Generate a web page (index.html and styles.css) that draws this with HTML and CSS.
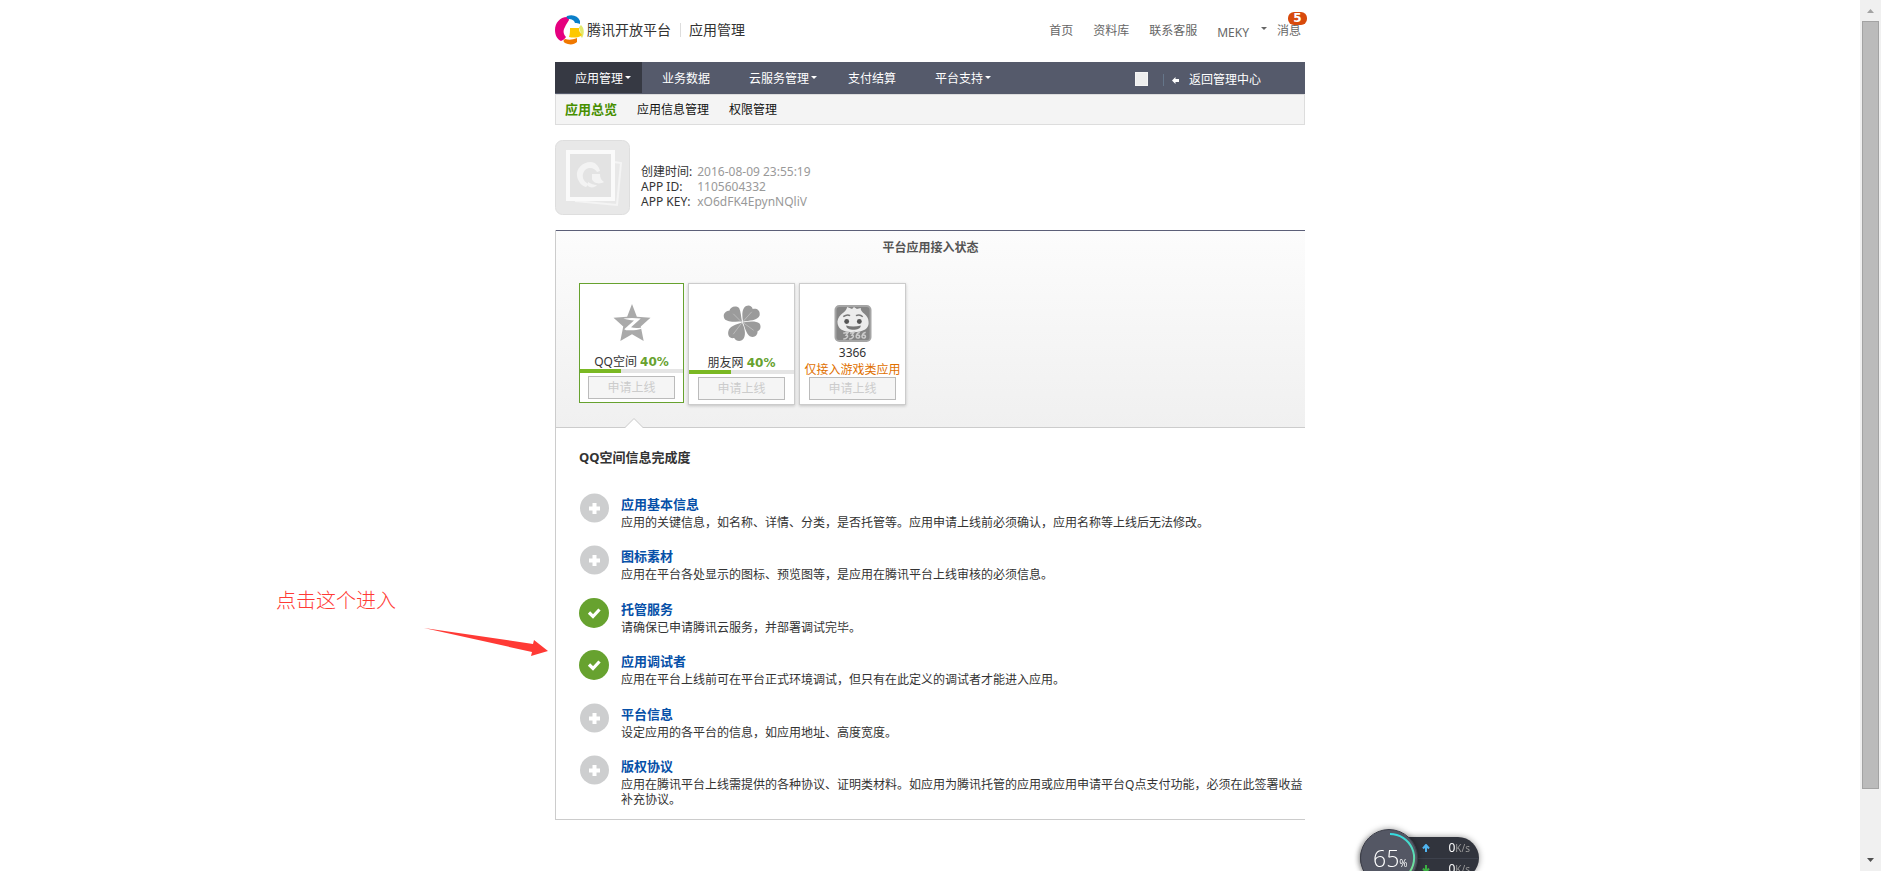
FILE: index.html
```html
<!DOCTYPE html>
<html lang="zh-CN">
<head>
<meta charset="utf-8">
<title>腾讯开放平台 - 应用管理</title>
<link rel="stylesheet" href="styles.css">
</head>
<body>
<svg class="defs" aria-hidden="true">
  <symbol id="plus" viewBox="0 0 30 30"><circle cx="15.500" cy="15" r="14.500" fill="#cdcecf"/><path d="M13.500 10h4v3.500h3.500v4h-3.500v3.500h-4v-3.500h-3.500v-4h3.500z" fill="#fff"/></symbol>
  <symbol id="check" viewBox="0 0 30 30"><circle cx="15" cy="15" r="15" fill="#67a22f"/><path d="M10 14.500l4 4 6.500-7" fill="none" stroke="#fff" stroke-width="3.200"/></symbol>
</svg>
<div class="page">
  <main class="container">
    <header class="header">
      <svg class="logo" viewBox="0 0 30 32" aria-hidden="true">
        <path d="M12 3C5 3 0 9 0 16c0 5 2 9 6 11 2-1 4-2 5-4-3-3-3-7-1-10 1-3 3-5 4-7 0-2-1-3-2-3z" fill="#e5007f"/>
        <path d="M12 2c6-2 11 0 13 5v3c-2-1-3-1-5-1-1-3-3-4-7-4-1-1-2-2-1-3z" fill="#0a7fc9"/>
        <path d="M26 11c3 3 4 8 1 13l-2-3c1-3 0-5-1-7 0-1 1-2 2-3z" fill="#e3e96b"/>
        <path d="M15 14h9c0 3 1 5 3 7-3 3-9 3-13 2 1-3 1-6 1-9z" fill="#fdc800"/>
        <path d="M10 25c4 1 7 1 12-1v4c-3 3-8 3-12 1-2-1-2-3 0-4z" fill="#f07800"/>
      </svg>
      <h1 class="brand">腾讯开放平台</h1>
      <span class="section">应用管理</span>
      <nav class="toplinks">
        <a href="#">首页</a>
        <a href="#">资料库</a>
        <a href="#">联系客服</a>
        <a href="#" class="user">MEKY<i class="caret"></i></a>
        <a href="#" class="news">消息<b class="badge">5</b></a>
      </nav>
    </header>

    <nav class="mainnav">
      <a href="#" class="active">应用管理<i class="caret"></i></a>
      <a href="#">业务数据</a>
      <a href="#">云服务管理<i class="caret"></i></a>
      <a href="#">支付结算</a>
      <a href="#">平台支持<i class="caret"></i></a>
      <span class="tile"></span>
      <a href="#" class="back"><svg viewBox="0 0 7 7" aria-hidden="true"><path d="M0 3.500L3.500 0v2H7v3H3.500v2z" fill="#fff"/></svg>返回管理中心</a>
    </nav>
    <nav class="subnav">
      <a href="#" class="current">应用总览</a>
      <a href="#">应用信息管理</a>
      <a href="#">权限管理</a>
    </nav>

    <section class="app">
      <svg class="avatar" viewBox="0 0 75 75" aria-hidden="true">
        <rect x=".5" y=".5" width="74" height="74" rx="7" fill="#e8e8e8" stroke="#dedede"/>
        <path d="M59 22l7 1-4 42-42-4" fill="none" stroke="#f4f4f4" stroke-width="2"/>
        <rect x="13" y="12" width="45" height="47" fill="#e3e3e3" stroke="#fafafa" stroke-width="4"/>
        <path d="M36 22c-9 0-15 7-14 14 1 6 5 10 9 11l3-3c-5-2-7-6-6-10 1-4 4-6 7-6s6 2 7 4l3-1c-1-5-5-9-9-9z" fill="#f3f3f3"/>
        <path d="M37 34h8c0 4 1 6 4 8-5 3-11 1-12-3z" fill="#f3f3f3"/><path d="M33 42c3 2 6 3 9 3-2 3-7 3-9 1z" fill="#f3f3f3"/>
      </svg>
      <dl class="meta">
        <dt>创建时间:</dt><dd>2016-08-09 23:55:19</dd>
        <dt>APP ID:</dt><dd>1105604332</dd>
        <dt>APP KEY:</dt><dd>xO6dFK4EpynNQliV</dd>
      </dl>
    </section>

    <section class="panel">
      <div class="status">
        <h2>平台应用接入状态</h2>
        <div class="cards">
          <article class="card selected">
            <svg class="icon" viewBox="0 0 38 38" aria-hidden="true">
              <path d="M19 0l5 13 14 1-10 9 3 15-12-7-12 7 3-15L0 14l14-1z" fill="#aaa"/>
              <path d="M10 15c6-1 12-1 18 0L18 24c4 1 9 1 14-1-3 3-7 4-19 4l-2-1 10-9c-4 0-7-1-11-2z" fill="#fff"/>
            </svg>
            <p class="name">QQ空间 <b>40%</b></p>
            <progress value="40" max="100" aria-label="QQ空间"></progress>
            <button disabled>申请上线</button>
          </article>
          <article class="card">
            <svg class="icon" viewBox="0 0 38 38" aria-hidden="true">
              <g fill="#9b9b9b"><path d="M19 17C18 12 18 7 16 3 12 0 7 2 6 6 1 6-1 11 1 14c3 4 12 3 18 3z"/><path d="M20 17c-1-6-1-11 1-14 3-4 8-3 9 1 5-1 8 2 7 7-2 5-11 5-17 6z"/><path d="M20 18c6-1 13-2 17 1 2 3 1 7-2 8 0 5-4 7-8 5-4-3-5-9-7-14z"/><path d="M19 18c3 6 4 12 2 16-2 4-8 4-10 0-5 1-7-3-6-7 1-5 8-7 14-9z"/></g>
              <path d="M18 17l-8-8M20 17l9-10M20 18l11 8M19 18l-9 12" stroke="#bbb" stroke-width="1"/>
            </svg>
            <p class="name">朋友网 <b>40%</b></p>
            <progress value="40" max="100" aria-label="朋友网"></progress>
            <button disabled>申请上线</button>
          </article>
          <article class="card game">
            <svg class="icon" viewBox="0 0 38 38" aria-hidden="true">
              <rect x="1" y="1" width="36" height="36" rx="4" fill="#858585" stroke="#a5a5a5" stroke-width="2"/>
              <path d="M13 2l5 2 2-2 3 2 4-1c-1 5 8 6 8 14 1 7-5 11-16 11S3 24 3 17C4 9 12 8 13 2z" fill="#ececec"/>
              <ellipse cx="12.500" cy="17" rx="2.500" ry="2.500" fill="#555"/><ellipse cx="25.500" cy="17" rx="2.500" ry="2.500" fill="#555"/>
              <path d="M9 12q4-3 7-1M22 11q4-2 7 1" fill="none" stroke="#777" stroke-width="1.500"/>
              <path d="M12 21q7 2 15 0c0 6-15 6-15 0z" fill="#777"/>
              <path d="M9 29l5-1-2 3c3 0 1 4-3 4M16 29l4-1-2 3c3 0 1 4-3 4M26 28c-4 1-5 6-2 6s2-4-1-3M32 28c-4 1-5 6-2 6s2-4-1-3" fill="none" stroke="#ccc" stroke-width="1.500"/>
            </svg>
            <p class="name">3366</p>
            <p class="note">仅接入游戏类应用</p>
            <button disabled>申请上线</button>
          </article>
        </div>
        <svg class="notch" viewBox="0 0 20 10" aria-hidden="true"><path d="M1 10L10 1l9 9z" fill="#fff"/><path d="M1 9.500L10 .5l9 9" fill="none" stroke="#ccc"/></svg>
      </div>
      <div class="progress">
        <h2>QQ空间信息完成度</h2>
        <ul>
          <li><svg><use href="#plus"/></svg><div><a href="#">应用基本信息</a><p>应用的关键信息，如名称、详情、分类，是否托管等。应用申请上线前必须确认，应用名称等上线后无法修改。</p></div></li>
          <li><svg><use href="#plus"/></svg><div><a href="#">图标素材</a><p>应用在平台各处显示的图标、预览图等，是应用在腾讯平台上线审核的必须信息。</p></div></li>
          <li><svg><use href="#check"/></svg><div><a href="#">托管服务</a><p>请确保已申请腾讯云服务，并部署调试完毕。</p></div></li>
          <li><svg><use href="#check"/></svg><div><a href="#">应用调试者</a><p>应用在平台上线前可在平台正式环境调试，但只有在此定义的调试者才能进入应用。</p></div></li>
          <li><svg><use href="#plus"/></svg><div><a href="#">平台信息</a><p>设定应用的各平台的信息，如应用地址、高度宽度。</p></div></li>
          <li><svg><use href="#plus"/></svg><div><a href="#">版权协议</a><p>应用在腾讯平台上线需提供的各种协议、证明类材料。如应用为腾讯托管的应用或应用申请平台Q点支付功能，必须在此签署收益补充协议。</p></div></li>
        </ul>
      </div>
    </section>

    <aside class="callout">点击这个进入</aside>
    <svg class="arrow" viewBox="0 0 124 32" aria-hidden="true"><path d="M0 1l109 16 1-4 14 11-17 5 1-4z" fill="#ff3a35"/></svg>
  </main>

  <div class="scrollbar" aria-hidden="true">
    <svg viewBox="0 0 7 4"><path d="M0 4L3.500 0 7 4z" fill="#a3a3a3"/></svg>
    <div class="thumb"></div>
    <svg viewBox="0 0 7 4"><path d="M0 0h7L3.500 4z" fill="#505050"/></svg>
  </div>
</div>

<div class="netmeter">
  <div class="rates">
    <p><svg viewBox="0 0 8 8"><path d="M4 8V2M1 4.500L4 1l3 3.500" fill="none" stroke="#4fb4f0" stroke-width="2"/></svg><span>0<small>K/s</small></span></p>
    <p><svg viewBox="0 0 8 8"><path d="M4 0v6M1 3.500L4 7l3-3.500" fill="none" stroke="#3cb043" stroke-width="2"/></svg><span>0<small>K/s</small></span></p>
  </div>
  <div class="dial">
    <svg viewBox="0 0 58 58" aria-hidden="true"><defs><linearGradient id="arc" x1="0" y1="0" x2="0" y2="1"><stop offset="0" stop-color="#35dbe0"/><stop offset="1" stop-color="#7fe08a"/></linearGradient></defs><circle cx="29" cy="29" r="28.500" fill="#545764" stroke="#3b3d47"/><path d="M30 5a24 24 0 0 1 18 40" fill="none" stroke="url(#arc)" stroke-width="2"/></svg>
    <span>65<small>%</small></span>
  </div>
</div>
</body>
</html>
```

FILE: styles.css
```css
* { box-sizing: border-box; }
body {
  margin: 0;
  height: 100vh;
  overflow: hidden;
  background: #fff;
  color: #333;
  font: 12px/15px "Noto Sans", "Noto Sans CJK SC", sans-serif;
}
h1, h2, p, dl, dd, ul { margin: 0; padding: 0; font-size: 12px; }
ul { list-style: none; }
a { color: inherit; text-decoration: none; }
svg { display: block; flex: none; }
.defs { position: absolute; width: 0; height: 0; }

.page { display: grid; grid-template-columns: 1fr 21px; height: 100vh; }
.container { position: relative; width: 100%; max-width: 750px; margin: 0 auto; }

.header { display: flex; align-items: center; height: 62px; padding-right: 4px; }
.logo { width: 30px; height: 32px; margin-top: -3px; }
.brand, .section { font-size: 14px; line-height: 20px; font-weight: 400; margin-bottom: 3px; }
.brand { margin-left: 2px; }
.section { position: relative; margin-left: 18px; }
.section::before { content: ""; position: absolute; left: -9px; top: 3px; height: 14px; border-left: 1px solid #ddd; }
.toplinks { display: flex; gap: 20px; margin-left: auto; color: #666; }
.toplinks a { position: relative; }
.toplinks .user { padding: 2px 8px 0 0; }
.caret { position: absolute; border: 3px solid transparent; border-top-color: currentColor; border-bottom: 0; }
.user .caret { right: -10px; top: 4px; }
.badge {
  position: absolute; right: -6px; top: -11px;
  width: 19px; height: 13px; border-radius: 6px;
  background: #d84a0c; color: #fff; text-align: center;
  font: bold 12px/13px "DejaVu Sans", sans-serif;
}

.mainnav { display: flex; align-items: center; height: 32px; background: #555a6b; color: #fff; }
.mainnav > a { position: relative; padding: 9px 19px 7px 20px; line-height: 16px; }
.mainnav .active { background: #363943; height: 31px; align-self: flex-start; }
.mainnav .caret { right: 11px; top: 14px; }
.tile { width: 13px; height: 14px; margin: 2px 15px 0 auto; background: #eee; border: 1px solid #f5f5f5; }
.mainnav .back { display: flex; align-items: center; gap: 10px; padding: 0 44px 0 8px; margin-top: 4px; line-height: 12px; border-left: 1px solid #65768a; }
.back svg { width: 7px; height: 7px; }
.subnav { display: flex; align-items: center; gap: 20px; height: 31px; padding: 0 9px; border: 1px solid #ddd; background: #f4f4f4; color: #111; }
.subnav .current { font-size: 13px; font-weight: 700; color: #478f00; }

.app { display: flex; gap: 11px; padding: 15px 0; }
.avatar { width: 75px; height: 75px; }
.meta { display: grid; grid-template-columns: auto 1fr; align-content: start; column-gap: 5px; padding-top: 24px; }
.meta dd { color: #999; }

.panel { border-left: 1px solid #ccc; border-bottom: 1px solid #ccc; }
.status { position: relative; padding: 9px 0 22px; border-top: 1px solid #5c5f78; border-bottom: 1px solid #ccc; background: linear-gradient(#fcfcfc, #f0f0f0); }
.status h2 { text-align: center; line-height: 16px; color: #555; }
.cards { display: flex; align-items: flex-start; gap: 4px; padding: 27px 0 0 23px; }
.card { width: 107px; height: 122px; border: 1px solid #ccc; background: #fff; box-shadow: 0 1px 3px rgba(0, 0, 0, .2); display: flex; flex-direction: column; align-items: center; padding-top: 21px; }
.card.selected { width: 105px; height: 120px; padding-top: 20px; border-color: #67a22f; box-shadow: none; }
.icon { width: 38px; height: 37px; }
.name { line-height: 14px; padding-top: 14px; }
.name b { font-family: "DejaVu Sans", sans-serif; color: #67a22f; }
progress { display: block; width: 100%; height: 4px; border: 0; appearance: none; background: #e5e5e5; }
progress::-webkit-progress-bar { background: #e5e5e5; }
progress::-webkit-progress-value { background: #7ab823; }
.card button { width: 87px; height: 23px; margin-top: 3px; padding: 0; border: 1px solid #bbb; background: #f5f5f5; color: #ccc; font: inherit; }
.game .name { padding-top: 4px; }
.note { color: #e07000; line-height: 15px; margin-top: 2px; }
.game button { margin-top: 0; }
.notch { position: absolute; left: 68px; bottom: -1px; width: 20px; height: 10px; }

.progress { padding: 21px 0 12px 23px; }
.progress h2 { font-size: 13px; line-height: 16px; margin-bottom: 28px; }
.progress li { display: flex; gap: 12px; padding-bottom: 15px; }
.progress li:nth-child(even) { padding-bottom: 16px; }
.progress li:last-child { padding-bottom: 0; }
.progress li svg { width: 30px; height: 30px; }
.progress li a { display: block; padding-top: 2px; font-size: 13px; line-height: 18px; font-weight: 700; color: #0650a8; }
.progress li p { margin-top: 2px; }

.callout { position: absolute; left: -279px; top: 587px; font-size: 20px; line-height: 28px; font-weight: 300; color: #ff3a35; white-space: nowrap; }
.arrow { position: absolute; left: -131px; top: 627px; width: 124px; height: 32px; }

.scrollbar { display: flex; flex-direction: column; align-items: center; padding: 9px 2px; background: #f0f0f0; }
.scrollbar svg { width: 7px; height: 4px; }
.thumb { width: 100%; height: 90%; margin: 8px 0 auto; background: #bbb; border: 1px solid #a3a3a3; }

.netmeter { position: fixed; left: 1360px; bottom: -16px; display: flex; align-items: center; width: 119px; height: 58px; color: #fff; }
.dial { position: absolute; left: 0; top: 0; border-radius: 50%; box-shadow: 0 0 6px rgba(0, 0, 0, .4); }
.dial svg { width: 58px; height: 58px; }
.dial span { position: absolute; left: 13px; top: 16px; font: 300 23px/26px "Open Sans", sans-serif; white-space: nowrap; }
.dial small { font-size: 10px; font-weight: 400; }
.rates { width: 100%; padding-left: 50px; border-radius: 21px; background: #31343d; box-shadow: 0 0 6px rgba(0, 0, 0, .4); }
.rates p { display: flex; align-items: center; justify-content: space-between; height: 21px; padding: 0 9px 0 12px; }
.rates p + p { border-top: 1px solid #3d414c; }
.rates svg { width: 8px; height: 8px; }
.rates small { font-size: 10px; color: #999; }
```
